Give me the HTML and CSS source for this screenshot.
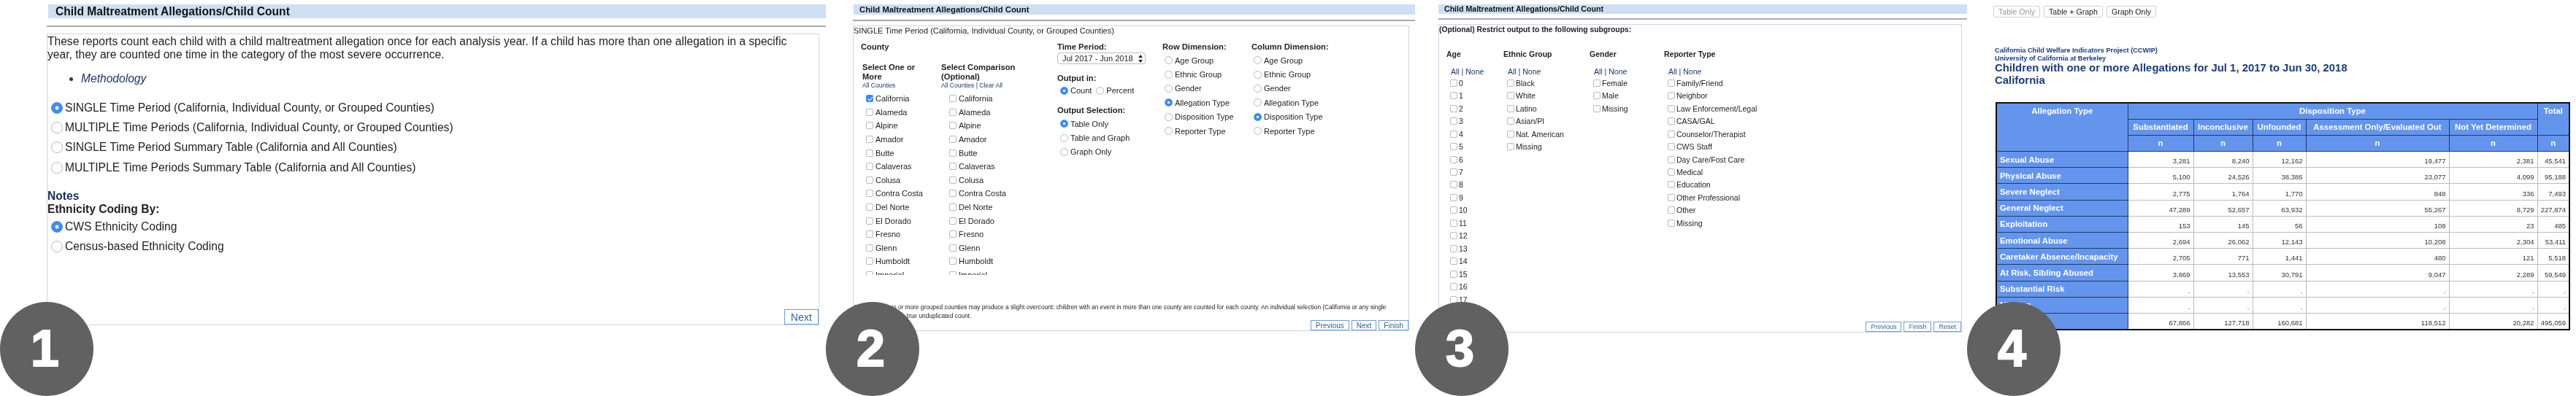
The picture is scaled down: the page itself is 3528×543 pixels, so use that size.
FILE: index.html
```html
<!DOCTYPE html>
<html lang="en">
<head>
    <meta charset="UTF-8">
    <title>Child Maltreatment Allegations/Child Count</title>
    <link rel="stylesheet" href="styles.css">
</head>
<body>
<div class="strip">

    <!-- step 1 -->
    <section class="panel panel-one">
        <h2 class="bar">Child Maltreatment Allegations/Child Count</h2>
        <hr class="rule">
        <div class="box">
            <p class="intro">These reports count each child with a child maltreatment allegation once for each analysis year. If a child has more than one allegation in a specific year, they are counted one time in the category of the most severe occurrence.</p>
            <ul class="links"><li>Methodology</li></ul>
            <div class="choices">
                <label><input type="radio" name="report" checked>SINGLE Time Period (California, Individual County, or Grouped Counties)</label>
                <label><input type="radio" name="report">MULTIPLE Time Periods (California, Individual County, or Grouped Counties)</label>
                <label><input type="radio" name="report">SINGLE Time Period Summary Table (California and All Counties)</label>
                <label><input type="radio" name="report">MULTIPLE Time Periods Summary Table (California and All Counties)</label>
            </div>
            <div class="notes">Notes</div>
            <div class="coding">Ethnicity Coding By:</div>
            <div class="choices">
                <label><input type="radio" name="coding" checked>CWS Ethnicity Coding</label>
                <label><input type="radio" name="coding">Census-based Ethnicity Coding</label>
            </div>
            <div class="buttons"><button>Next</button></div>
        </div>
        <div class="step">1</div>
    </section>

    <!-- step 2 -->
    <section class="panel panel-two">
        <h2 class="bar">Child Maltreatment Allegations/Child Count</h2>
        <hr class="rule">
        <div class="box">
            <p class="intro">SINGLE Time Period (California, Individual County, or Grouped Counties)</p>
            <div class="options">
                <div class="county">
                    <h3>County</h3>
                    <div class="county-cols">
                        <div class="county-col">
                            <h4>Select One or<br>More</h4>
                            <div class="mini">All Counties</div>
                        </div>
                        <div class="county-col">
                            <h4>Select Comparison<br>(Optional)</h4>
                            <div class="mini">All Counties | Clear All</div>
                        </div>
                    </div>
                    <div class="county-scroll">
                        <div class="checks">
                            <label><input type="checkbox" checked>California</label>
                            <label><input type="checkbox">Alameda</label>
                            <label><input type="checkbox">Alpine</label>
                            <label><input type="checkbox">Amador</label>
                            <label><input type="checkbox">Butte</label>
                            <label><input type="checkbox">Calaveras</label>
                            <label><input type="checkbox">Colusa</label>
                            <label><input type="checkbox">Contra Costa</label>
                            <label><input type="checkbox">Del Norte</label>
                            <label><input type="checkbox">El Dorado</label>
                            <label><input type="checkbox">Fresno</label>
                            <label><input type="checkbox">Glenn</label>
                            <label><input type="checkbox">Humboldt</label>
                            <label><input type="checkbox">Imperial</label>
                        </div>
                        <div class="checks">
                            <label><input type="checkbox">California</label>
                            <label><input type="checkbox">Alameda</label>
                            <label><input type="checkbox">Alpine</label>
                            <label><input type="checkbox">Amador</label>
                            <label><input type="checkbox">Butte</label>
                            <label><input type="checkbox">Calaveras</label>
                            <label><input type="checkbox">Colusa</label>
                            <label><input type="checkbox">Contra Costa</label>
                            <label><input type="checkbox">Del Norte</label>
                            <label><input type="checkbox">El Dorado</label>
                            <label><input type="checkbox">Fresno</label>
                            <label><input type="checkbox">Glenn</label>
                            <label><input type="checkbox">Humboldt</label>
                            <label><input type="checkbox">Imperial</label>
                        </div>
                    </div>
                </div>
                <div class="period">
                    <h3>Time Period:</h3>
                    <div class="select">Jul 2017 - Jun 2018
                        <svg width="6" height="11" viewBox="0 0 6 11"><path d="M3 0 6 4H0zM3 11 0 7h6z" fill="#222"/></svg>
                    </div>
                    <h3 class="gap-output">Output in:</h3>
                    <div class="inline-radios">
                        <label><input type="radio" name="unit" checked>Count</label>
                        <label><input type="radio" name="unit">Percent</label>
                    </div>
                    <h3 class="gap-selection">Output Selection:</h3>
                    <div class="radios indent">
                        <label><input type="radio" name="out" checked>Table Only</label>
                        <label><input type="radio" name="out">Table and Graph</label>
                        <label><input type="radio" name="out">Graph Only</label>
                    </div>
                </div>
                <div class="dimension dim-row">
                    <h3>Row Dimension:</h3>
                    <div class="radios">
                        <label><input type="radio" name="row">Age Group</label>
                        <label><input type="radio" name="row">Ethnic Group</label>
                        <label><input type="radio" name="row">Gender</label>
                        <label><input type="radio" name="row" checked>Allegation Type</label>
                        <label><input type="radio" name="row">Disposition Type</label>
                        <label><input type="radio" name="row">Reporter Type</label>
                    </div>
                </div>
                <div class="dimension">
                    <h3>Column Dimension:</h3>
                    <div class="radios">
                        <label><input type="radio" name="col">Age Group</label>
                        <label><input type="radio" name="col">Ethnic Group</label>
                        <label><input type="radio" name="col">Gender</label>
                        <label><input type="radio" name="col">Allegation Type</label>
                        <label><input type="radio" name="col" checked>Disposition Type</label>
                        <label><input type="radio" name="col">Reporter Type</label>
                    </div>
                </div>
            </div>
            <p class="footnote">Selection of two or more grouped counties may produce a slight overcount: children with an event in more than one county are counted for each county. An individual selection (California or any single county) produces a true unduplicated count.</p>
            <div class="buttons">
                <button>Previous</button>
                <button>Next</button>
                <button>Finish</button>
            </div>
        </div>
        <div class="step">2</div>
    </section>

    <!-- step 3 -->
    <section class="panel panel-three">
        <h2 class="bar">Child Maltreatment Allegations/Child Count</h2>
        <hr class="rule">
        <div class="box">
            <p class="intro">(Optional) Restrict output to the following subgroups:</p>
            <div class="subgroups">
                <div class="subgroup sub-age">
                    <h3>Age</h3>
                    <div class="all-none">All | None</div>
                    <div class="checks">
                        <label><input type="checkbox">0</label>
                        <label><input type="checkbox">1</label>
                        <label><input type="checkbox">2</label>
                        <label><input type="checkbox">3</label>
                        <label><input type="checkbox">4</label>
                        <label><input type="checkbox">5</label>
                        <label><input type="checkbox">6</label>
                        <label><input type="checkbox">7</label>
                        <label><input type="checkbox">8</label>
                        <label><input type="checkbox">9</label>
                        <label><input type="checkbox">10</label>
                        <label><input type="checkbox">11</label>
                        <label><input type="checkbox">12</label>
                        <label><input type="checkbox">13</label>
                        <label><input type="checkbox">14</label>
                        <label><input type="checkbox">15</label>
                        <label><input type="checkbox">16</label>
                        <label><input type="checkbox">17</label>
                    </div>
                </div>
                <div class="subgroup sub-ethnic">
                    <h3>Ethnic Group</h3>
                    <div class="all-none">All | None</div>
                    <div class="checks">
                        <label><input type="checkbox">Black</label>
                        <label><input type="checkbox">White</label>
                        <label><input type="checkbox">Latino</label>
                        <label><input type="checkbox">Asian/PI</label>
                        <label><input type="checkbox">Nat. American</label>
                        <label><input type="checkbox">Missing</label>
                    </div>
                </div>
                <div class="subgroup sub-gender">
                    <h3>Gender</h3>
                    <div class="all-none">All | None</div>
                    <div class="checks">
                        <label><input type="checkbox">Female</label>
                        <label><input type="checkbox">Male</label>
                        <label><input type="checkbox">Missing</label>
                    </div>
                </div>
                <div class="subgroup">
                    <h3>Reporter Type</h3>
                    <div class="all-none">All | None</div>
                    <div class="checks">
                        <label><input type="checkbox">Family/Friend</label>
                        <label><input type="checkbox">Neighbor</label>
                        <label><input type="checkbox">Law Enforcement/Legal</label>
                        <label><input type="checkbox">CASA/GAL</label>
                        <label><input type="checkbox">Counselor/Therapist</label>
                        <label><input type="checkbox">CWS Staff</label>
                        <label><input type="checkbox">Day Care/Fost Care</label>
                        <label><input type="checkbox">Medical</label>
                        <label><input type="checkbox">Education</label>
                        <label><input type="checkbox">Other Professional</label>
                        <label><input type="checkbox">Other</label>
                        <label><input type="checkbox">Missing</label>
                    </div>
                </div>
            </div>
            <div class="buttons">
                <button>Previous</button>
                <button>Finish</button>
                <button>Reset</button>
            </div>
        </div>
        <div class="step">3</div>
    </section>

    <!-- step 4 -->
    <section class="panel panel-four">
        <div class="view-tabs">
            <button class="tab-off">Table Only</button>
            <button>Table + Graph</button>
            <button>Graph Only</button>
        </div>
        <div class="source">California Child Welfare Indicators Project (CCWIP)<br>University of California at Berkeley</div>
        <div class="report-title">Children with one or more Allegations for Jul 1, 2017 to Jun 30, 2018<br>California</div>
        <table class="results">
            <colgroup>
                <col class="c-label"><col class="c-sub"><col class="c-inc"><col class="c-unf"><col class="c-ass"><col class="c-nyd"><col class="c-tot">
            </colgroup>
            <thead>
                <tr>
                    <th rowspan="3">Allegation Type</th>
                    <th colspan="5">Disposition Type</th>
                    <th rowspan="2">Total</th>
                </tr>
                <tr>
                    <th>Substantiated</th>
                    <th>Inconclusive</th>
                    <th>Unfounded</th>
                    <th>Assessment Only/Evaluated Out</th>
                    <th>Not Yet Determined</th>
                </tr>
                <tr><th>n</th><th>n</th><th>n</th><th>n</th><th>n</th><th>n</th></tr>
            </thead>
            <tbody>
                <tr><th>Sexual Abuse</th><td>3,281</td><td>8,240</td><td>12,162</td><td>19,477</td><td>2,381</td><td>45,541</td></tr>
                <tr><th>Physical Abuse</th><td>5,100</td><td>24,526</td><td>38,386</td><td>23,077</td><td>4,099</td><td>95,188</td></tr>
                <tr><th>Severe Neglect</th><td>2,775</td><td>1,764</td><td>1,770</td><td>848</td><td>336</td><td>7,493</td></tr>
                <tr><th>General Neglect</th><td>47,289</td><td>52,657</td><td>63,932</td><td>55,267</td><td>8,729</td><td>227,874</td></tr>
                <tr><th>Exploitation</th><td>153</td><td>145</td><td>56</td><td>108</td><td>23</td><td>485</td></tr>
                <tr><th>Emotional Abuse</th><td>2,694</td><td>26,062</td><td>12,143</td><td>10,208</td><td>2,304</td><td>53,411</td></tr>
                <tr><th>Caretaker Absence/Incapacity</th><td>2,705</td><td>771</td><td>1,441</td><td>480</td><td>121</td><td>5,518</td></tr>
                <tr><th>At Risk, Sibling Abused</th><td>3,869</td><td>13,553</td><td>30,791</td><td>9,047</td><td>2,289</td><td>59,549</td></tr>
                <tr><th>Substantial Risk</th><td>.</td><td>.</td><td>.</td><td>.</td><td>.</td><td>.</td></tr>
                <tr><th>Missing</th><td>.</td><td>.</td><td>.</td><td>.</td><td>.</td><td>.</td></tr>
                <tr><th>Total</th><td>67,866</td><td>127,718</td><td>160,681</td><td>118,512</td><td>20,282</td><td>495,059</td></tr>
            </tbody>
        </table>
        <div class="step">4</div>
    </section>

</div>
</body>
</html>
```

FILE: styles.css
```css
* {
    margin: 0;
    padding: 0;
    box-sizing: border-box;
}

body {
    font-family: 'Liberation Sans', Arial, sans-serif;
    background: #fff;
    color: #222;
    overflow: hidden;
}

/* the panels are pasted screenshots, so everything is a little soft */
.strip {
    display: flex;
    height: 543px;
    filter: blur(0.35px);
}

.panel {
    position: relative;
    flex: none;
    height: 543px;
}

.step {
    position: absolute;
    left: 0;
    bottom: 0;
    width: 128px;
    height: 129px;
    padding-right: 5px;
    border-radius: 50%;
    background: #616161;
    color: #fff;
    font-weight: bold;
    font-size: 70px;
    line-height: 129px;
    text-align: center;
    -webkit-text-stroke: 2px #fff;
}

.bar {
    background: #cedff3;
    color: #111;
    font-weight: bold;
}

.rule {
    border: none;
    height: 2px;
    background: #aaa;
}

.box {
    display: flex;
    flex-direction: column;
    border: 1px solid #c6d6ea;
    background: #fff;
}

.buttons {
    display: flex;
    justify-content: flex-end;
    margin-top: auto;
}

button {
    background: #fff;
    border: 1px solid #6f9bdd;
    color: #35609a;
    font-family: inherit;
}

label {
    display: flex;
    align-items: center;
    white-space: nowrap;
}

input {
    appearance: none;
    flex: none;
    background: #fff;
    border: 1px solid #b9b9b9;
}

input[type="radio"] {
    border-radius: 50%;
}

input[type="radio"]:checked {
    border-color: #3f8cf3;
    background: radial-gradient(circle, #fff 0 20%, #3f8cf3 30%);
}

input[type="checkbox"] {
    position: relative;
    border-radius: 2px;
}

input[type="checkbox"]:checked {
    border-color: #3f8cf3;
    background: #3f8cf3;
}

input[type="checkbox"]:checked::after {
    content: "";
    position: absolute;
    left: 2.5px;
    top: 0;
    width: 3px;
    height: 6px;
    border: solid #fff;
    border-width: 0 1px 1px 0;
    transform: rotate(40deg);
}

/* step 1 */

.panel-one {
    width: 1131px;
    padding: 6px 0 0 64px;
}

.panel-one .bar {
    height: 19px;
    margin-left: 2px;
    padding-left: 10px;
    font-size: 15.6px;
    line-height: 19px;
}

.panel-one .rule {
    margin-top: 10px;
}

.panel-one .box {
    width: 1058px;
    height: 400px;
    margin-top: 9px;
    font-size: 15.6px;
}

.panel-one .intro {
    width: 1050px;
    line-height: 18px;
    margin-top: 1px;
}

.links {
    margin: 15px 0 0 46px;
    line-height: 18px;
    font-style: italic;
    color: #1c3763;
}

.panel-one .choices {
    margin-top: 17px;
    padding-left: 5px;
}

.panel-one .choices label {
    height: 27.3px;
}

.panel-one input {
    width: 16px;
    height: 16px;
    margin-right: 3px;
}

.notes {
    margin-top: 17px;
    line-height: 18px;
    font-weight: bold;
    color: #12305c;
}

.coding {
    line-height: 18px;
    font-weight: bold;
}

.panel-one .coding + .choices {
    margin-top: 1px;
}

.panel-one button {
    width: 47px;
    height: 21px;
    font-size: 14px;
}

/* step 2 */

.panel-two {
    width: 807px;
    padding: 6px 0 0 37px;
}

.panel-two .bar {
    height: 14px;
    margin-left: 1px;
    padding-left: 8px;
    font-size: 11.3px;
    line-height: 14px;
}

.panel-two .rule {
    margin-top: 7px;
}

.panel-two .box {
    width: 762px;
    height: 419px;
    margin-top: 6px;
    font-size: 11px;
}

.panel-two .intro {
    line-height: 13px;
}

.options {
    display: flex;
    margin-top: 9px;
    padding-left: 10px;
}

h3,
h4 {
    font-size: 11.2px;
    font-weight: bold;
    line-height: 13px;
}

.county {
    width: 269px;
}

.county-cols {
    display: flex;
    margin-top: 15px;
    padding-left: 2px;
}

.county-col {
    width: 108px;
}

.mini {
    font-size: 8.5px;
    line-height: 10px;
    color: #1c3763;
}

.county-scroll {
    display: flex;
    height: 251px;
    margin-top: 4px;
    padding-left: 7px;
    overflow: hidden;
}

.county-scroll .checks {
    width: 114px;
}

.county-scroll label {
    height: 18.6px;
}

.checks input {
    width: 10px;
    height: 10px;
    margin-right: 3px;
}

.period {
    width: 144px;
}

.select {
    display: flex;
    align-items: center;
    justify-content: space-between;
    width: 121px;
    height: 16px;
    margin-top: 1px;
    padding: 0 3px 0 6px;
    border: 1px solid #bbb;
    border-radius: 4px;
}

.gap-output {
    margin-top: 13px;
}

.gap-selection {
    margin-top: 15px;
}

.inline-radios {
    display: flex;
    gap: 6px;
    margin-top: 4px;
    padding-left: 4px;
}

.panel-two input[type="radio"] {
    width: 11px;
    height: 11px;
    margin-right: 3px;
}

.radios {
    margin-top: 2px;
    padding-left: 3px;
}

.radios.indent {
    padding-left: 4px;
}

.radios label {
    height: 19.4px;
}

.dim-row {
    width: 122px;
}

.panel-two .footnote {
    width: 740px;
    margin-top: 38px;
    font-size: 8.3px;
    line-height: 12px;
}

.panel-two .buttons {
    gap: 3px;
}

.panel-two button {
    height: 14px;
    padding: 0 6px;
    font-size: 10px;
}

/* step 3 */

.panel-three {
    width: 756px;
    padding: 6px 0 0 32px;
}

.panel-three .bar {
    height: 13px;
    padding-left: 8px;
    font-size: 10.6px;
    line-height: 13px;
}

.panel-three .rule {
    margin-top: 6px;
}

.panel-three .box {
    width: 717px;
    height: 423px;
    margin-top: 6px;
    font-size: 10.5px;
}

.panel-three .intro {
    font-weight: bold;
    font-size: 10.3px;
    line-height: 13px;
}

.subgroups {
    display: flex;
    margin-top: 21px;
    padding-left: 10px;
}

.subgroup h3 {
    font-size: 10.5px;
}

.sub-age {
    width: 78px;
}

.sub-ethnic {
    width: 118px;
}

.sub-gender {
    width: 102px;
}

.all-none {
    margin: 11px 0 0 6px;
    line-height: 13px;
    color: #1c3763;
}

.subgroup .checks {
    padding-left: 5px;
}

.subgroup .checks input {
    margin-right: 2px;
}

.subgroup label {
    height: 17.47px;
}

.panel-three .buttons {
    gap: 3px;
}

.panel-three button {
    height: 14px;
    padding: 0 6px;
    font-size: 9px;
}

/* step 4 */

.panel-four {
    width: 834px;
    padding: 8px 0 0 36px;
    color: #1a3a80;
}

.view-tabs {
    display: flex;
    gap: 5px;
}

.view-tabs button {
    height: 16px;
    padding: 0 6px;
    border: 1px solid #d0d0d0;
    border-radius: 2px;
    color: #222;
    font-size: 10.6px;
}

.view-tabs .tab-off {
    color: #999;
}

.source {
    margin: 40px 0 0 2px;
    font-size: 9.2px;
    font-weight: bold;
    line-height: 10.5px;
}

.report-title {
    margin-left: 2px;
    font-size: 14.9px;
    font-weight: bold;
    line-height: 17px;
}

.results {
    width: 785px;
    margin: 21px 0 0 3px;
    table-layout: fixed;
    border-collapse: collapse;
    border: 2px solid #111;
    color: #333;
}

.c-label { width: 180px; }
.c-sub { width: 90px; }
.c-inc { width: 81px; }
.c-unf { width: 73px; }
.c-ass { width: 196px; }
.c-nyd { width: 121px; }
.c-tot { width: 44px; }

.results th {
    height: 22.2px;
    padding: 0 2px;
    background: #6495ed;
    border: 1px solid #1f3a66;
    color: #fff;
    font-size: 11.4px;
    white-space: nowrap;
}

.results thead th[rowspan] {
    vertical-align: top;
    padding-top: 4px;
}

.results tbody th {
    padding-left: 4px;
    text-align: left;
}

.results td {
    padding: 0 4px 3px 0;
    border: 1px solid #bbb;
    font-size: 9.5px;
    text-align: right;
    vertical-align: bottom;
}
```
